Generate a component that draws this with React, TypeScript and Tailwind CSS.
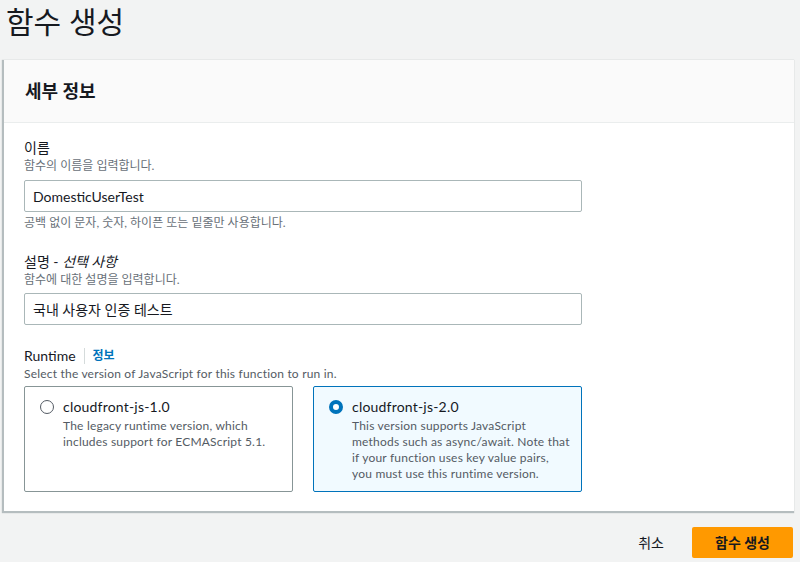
import React from 'react';

const font = { fontFamily: 'Lato, "Noto Sans CJK KR", sans-serif' };

interface RuntimeOptionProps {
  name: string;
  description: string;
  selected?: boolean;
}

function RuntimeOption({ name, description, selected }: RuntimeOptionProps) {
  return (
    <div
      className={
        selected
          ? 'flex-1 h-[106px] rounded-[2px] border border-[#0073bb] bg-[#f1faff] pl-[15px] pr-[2px] pt-[10px]'
          : 'flex-1 h-[106px] rounded-[2px] border border-[#879596] bg-white pl-[15px] pr-[2px] pt-[10px]'
      }
    >
      <div className="flex items-start gap-[9px]">
        {selected ? (
          <span className="mt-[3px] w-[14px] h-[14px] rounded-full border-[4px] border-[#0073bb] bg-white flex-shrink-0" />
        ) : (
          <span className="mt-[3px] w-[14px] h-[14px] rounded-full border-[1.5px] border-[#545b64] bg-white flex-shrink-0" />
        )}
        <div>
          <div className="text-[14px] leading-[20px] text-[#16191f] tracking-[0.2px]">{name}</div>
          <div className="max-w-[219px] text-[12px] leading-[16px] text-[#545b64] mt-[1px] tracking-[0.2px]">
            {description}
          </div>
        </div>
      </div>
    </div>
  );
}

export default function App() {
  return (
    <div className="w-[800px] h-[562px] bg-[#f2f3f3] overflow-hidden" style={font}>
      <h1 className="text-[30px] leading-[40px] text-[#16191f] font-normal pl-[6px] pt-[1px] h-[60px]">
        함수 생성
      </h1>

      {/* Details card */}
      <section className="ml-[4px] w-[790px] h-[451px] bg-white shadow-[-1px_1px_1px_1px_rgba(0,28,36,0.25)]">
        <div className="h-[63px] bg-[#fafafa] border-b border-[#eaeded] flex items-center px-[21px]">
          <h2 className="text-[18px] font-bold text-[#16191f]">세부 정보</h2>
        </div>

        <div className="pl-[20px] pt-[15px]">
          {/* Name */}
          <div className="text-[14px] leading-[20px] text-[#16191f]">이름</div>
          <div className="text-[12px] leading-[16px] text-[#687078]">함수의 이름을 입력합니다.</div>
          <div className="mt-[6px] w-[558px] h-[32px] border border-[#aab7b8] rounded-[2px] flex items-center px-[8px] text-[14px] text-[#16191f]">
            DomesticUserTest
          </div>
          <div className="mt-[3px] text-[12px] leading-[16px] text-[#687078]">
            공백 없이 문자, 숫자, 하이픈 또는 밑줄만 사용합니다.
          </div>

          {/* Description */}
          <div className="mt-[21px] text-[14px] leading-[20px] text-[#16191f]">
            설명 - <i>선택 사항</i>
          </div>
          <div className="text-[12px] leading-[16px] text-[#687078]">함수에 대한 설명을 입력합니다.</div>
          <div className="mt-[5px] w-[558px] h-[32px] border border-[#aab7b8] rounded-[2px] flex items-center px-[8px] text-[14px] text-[#16191f]">
            국내 사용자 인증 테스트
          </div>

          {/* Runtime */}
          <div className="mt-[21px] flex items-center text-[14px] leading-[20px]">
            <span className="text-[#16191f]">Runtime</span>
            <span className="mx-[8px] h-[16px] border-l border-[#d5dbdb]" />
            <span className="text-[12px] font-bold text-[#0073bb]">정보</span>
          </div>
          <div className="text-[12px] leading-[16px] text-[#545b64] tracking-[0.2px]">
            Select the version of JavaScript for this function to run in.
          </div>
          <div className="mt-[4px] w-[558px] flex gap-[20px]">
            <RuntimeOption
              name="cloudfront-js-1.0"
              description="The legacy runtime version, which includes support for ECMAScript 5.1."
            />
            <RuntimeOption
              selected
              name="cloudfront-js-2.0"
              description="This version supports JavaScript methods such as async/await. Note that if your function uses key value pairs, you must use this runtime version."
            />
          </div>
        </div>
      </section>

      {/* Footer actions */}
      <div className="flex items-center justify-end gap-[28px] pr-[7px] pt-[16px]">
        <span className="text-[14px] text-[#16191f]">취소</span>
        <button className="w-[101px] h-[31px] bg-[#ff9900] rounded-[2px] text-[14px] font-bold text-[#16191f]">
          함수 생성
        </button>
      </div>
    </div>
  );
}
